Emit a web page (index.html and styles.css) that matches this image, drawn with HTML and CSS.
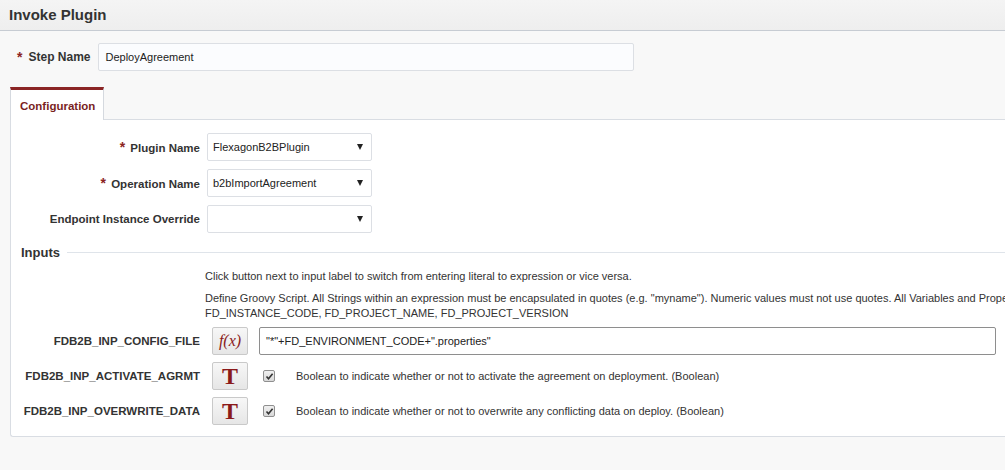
FILE: index.html
```html
<!DOCTYPE html>
<html lang="en">
<head>
  <meta charset="UTF-8">
  <title>Invoke Plugin</title>
  <link rel="stylesheet" href="styles.css">
</head>
<body>
  <div class="title-bar">Invoke Plugin</div>

  <div class="step-row">
    <span class="req">*</span>
    <label class="step-label">Step Name</label>
    <div class="text-input step-input">DeployAgreement</div>
  </div>

  <div class="tabs">
    <div class="tab active">Configuration</div>
  </div>

  <div class="panel">
    <div class="field-row">
      <label class="field-label"><span class="req">*</span> Plugin Name</label>
      <div class="select"><span>FlexagonB2BPlugin</span><span class="arrow"></span></div>
    </div>
    <div class="field-row">
      <label class="field-label"><span class="req">*</span> Operation Name</label>
      <div class="select"><span>b2bImportAgreement</span><span class="arrow"></span></div>
    </div>
    <div class="field-row">
      <label class="field-label">Endpoint Instance Override</label>
      <div class="select"><span></span><span class="arrow"></span></div>
    </div>

    <div class="section-head">
      <span>Inputs</span>
      <div class="rule"></div>
    </div>

    <div class="help">
      <p class="help-first">Click button next to input label to switch from entering literal to expression or vice versa.</p>
      <p>Define Groovy Script. All Strings within an expression must be encapsulated in quotes (e.g. "myname"). Numeric values must not use quotes. All Variables and Properties are case sensitive.<br>FD_INSTANCE_CODE, FD_PROJECT_NAME, FD_PROJECT_VERSION</p>
    </div>

    <div class="input-row">
      <label class="field-label">FDB2B_INP_CONFIG_FILE</label>
      <button class="mode-btn expr">f(x)</button>
      <div class="text-input expr-input">"*"+FD_ENVIRONMENT_CODE+".properties"</div>
    </div>
    <div class="input-row">
      <label class="field-label">FDB2B_INP_ACTIVATE_AGRMT</label>
      <button class="mode-btn literal">T</button>
      <span class="check"><svg width="9" height="9" viewBox="0 0 9 9"><path d="M1.5 4.5 L3.5 6.8 L7.6 1.8" fill="none" stroke="#333" stroke-width="1.6"/></svg></span>
      <span class="desc">Boolean to indicate whether or not to activate the agreement on deployment. (Boolean)</span>
    </div>
    <div class="input-row">
      <label class="field-label">FDB2B_INP_OVERWRITE_DATA</label>
      <button class="mode-btn literal">T</button>
      <span class="check"><svg width="9" height="9" viewBox="0 0 9 9"><path d="M1.5 4.5 L3.5 6.8 L7.6 1.8" fill="none" stroke="#333" stroke-width="1.6"/></svg></span>
      <span class="desc">Boolean to indicate whether or not to overwrite any conflicting data on deploy. (Boolean)</span>
    </div>
  </div>
</body>
</html>
```

FILE: styles.css
```css
body {
  margin: 0;
  background-color: #f8f8f8;
  font-family: "Liberation Sans", Arial, sans-serif;
  font-size: 11px;
  color: #333;
  overflow: hidden;
}

.title-bar {
  height: 30px;
  line-height: 30px;
  padding-left: 9px;
  background: linear-gradient(#f4f4f4, #eeeeee);
  border-bottom: 1px solid #c7ccd3;
  font-size: 15px;
  font-weight: bold;
  color: #333;
}

.req {
  color: #8b2323;
  font-size: 14px;
  font-weight: bold;
}

.step-row {
  display: flex;
  align-items: center;
  margin-top: 12px;
  padding-left: 17px;
}

.step-label {
  font-weight: bold;
  font-size: 12px;
  margin-left: 6px;
  margin-right: 8px;
}

.text-input {
  box-sizing: border-box;
  height: 28px;
  line-height: 26px;
  padding: 0 6px;
  background-color: #fbfcfe;
  border: 1px solid #dcdfe4;
  border-radius: 2px;
  font-size: 11px;
  color: #222;
}

.step-input {
  width: 536px;
}

.tabs {
  display: flex;
  margin-top: 16px;
  margin-left: 10px;
}

.tab {
  box-sizing: border-box;
  width: 94px;
  height: 33px;
  padding-top: 10px;
  padding-left: 9px;
  background-color: #fff;
  border-top: 3px solid #8b2525;
  border-left: 1px solid #d5d9df;
  border-right: 1px solid #d5d9df;
  font-weight: bold;
  font-size: 11.5px;
  color: #7a1f1f;
  margin-bottom: -1px;
  position: relative;
}

.panel {
  box-sizing: border-box;
  margin-left: 10px;
  height: 318px;
  background-color: #fff;
  border: 1px solid #d9dde3;
  border-right: none;
  border-radius: 0 0 0 3px;
  padding-top: 13px;
  overflow: hidden;
}

.field-row {
  display: flex;
  align-items: center;
  height: 27px;
  margin-bottom: 9px;
}

.field-label {
  box-sizing: border-box;
  width: 189px;
  text-align: right;
  font-weight: bold;
  font-size: 11.5px;
  flex-shrink: 0;
}

.field-label .req {
  margin-right: 2px;
}

.select {
  box-sizing: border-box;
  display: flex;
  align-items: center;
  justify-content: space-between;
  width: 165px;
  height: 28px;
  margin-left: 7px;
  padding: 0 8px 0 5px;
  background-color: #fff;
  border: 1px solid #dcdfe4;
  border-radius: 2px;
  color: #222;
}

.arrow {
  width: 0;
  height: 0;
  border-left: 3px solid transparent;
  border-right: 3px solid transparent;
  border-top: 6px solid #222;
}

.section-head {
  display: flex;
  align-items: center;
  margin-top: 13px;
  padding-left: 10px;
}

.section-head span {
  font-weight: bold;
  font-size: 13px;
  color: #333;
}

.section-head .rule {
  flex: 1;
  height: 1px;
  margin-left: 7px;
  background-color: #dfe4ea;
}

.help {
  padding-left: 194px;
  white-space: nowrap;
  color: #333;
}

.help p {
  margin: 0;
  line-height: 15px;
}

.help .help-first {
  margin-top: 9px;
  margin-bottom: 7px;
}

.input-row {
  display: flex;
  align-items: center;
  height: 28px;
  margin-top: 6px;
}

.input-row + .input-row {
  margin-top: 7px;
}

.mode-btn {
  box-sizing: border-box;
  width: 36px;
  height: 28px;
  margin-left: 12px;
  padding: 0;
  background: linear-gradient(#f7f7f7, #e6e6e6);
  border: 1px solid #c9c9c9;
  border-radius: 2px;
  color: #8b1a1a;
  font-family: "Liberation Serif", "Times New Roman", serif;
}

.mode-btn.expr {
  font-style: italic;
  font-size: 16px;
}

.mode-btn.literal {
  font-weight: bold;
  font-size: 24px;
  line-height: 24px;
}

.expr-input {
  width: 737px;
  margin-left: 11px;
  border-color: #8e8e8e;
  background-color: #fff;
}

.check {
  box-sizing: border-box;
  display: flex;
  align-items: center;
  justify-content: center;
  width: 12px;
  height: 12px;
  margin-left: 15px;
  background: linear-gradient(#f0f0f0, #d8d8d8);
  border: 1px solid #8f8f8f;
  border-radius: 2px;
}

.desc {
  margin-left: 21px;
  color: #333;
}
```
